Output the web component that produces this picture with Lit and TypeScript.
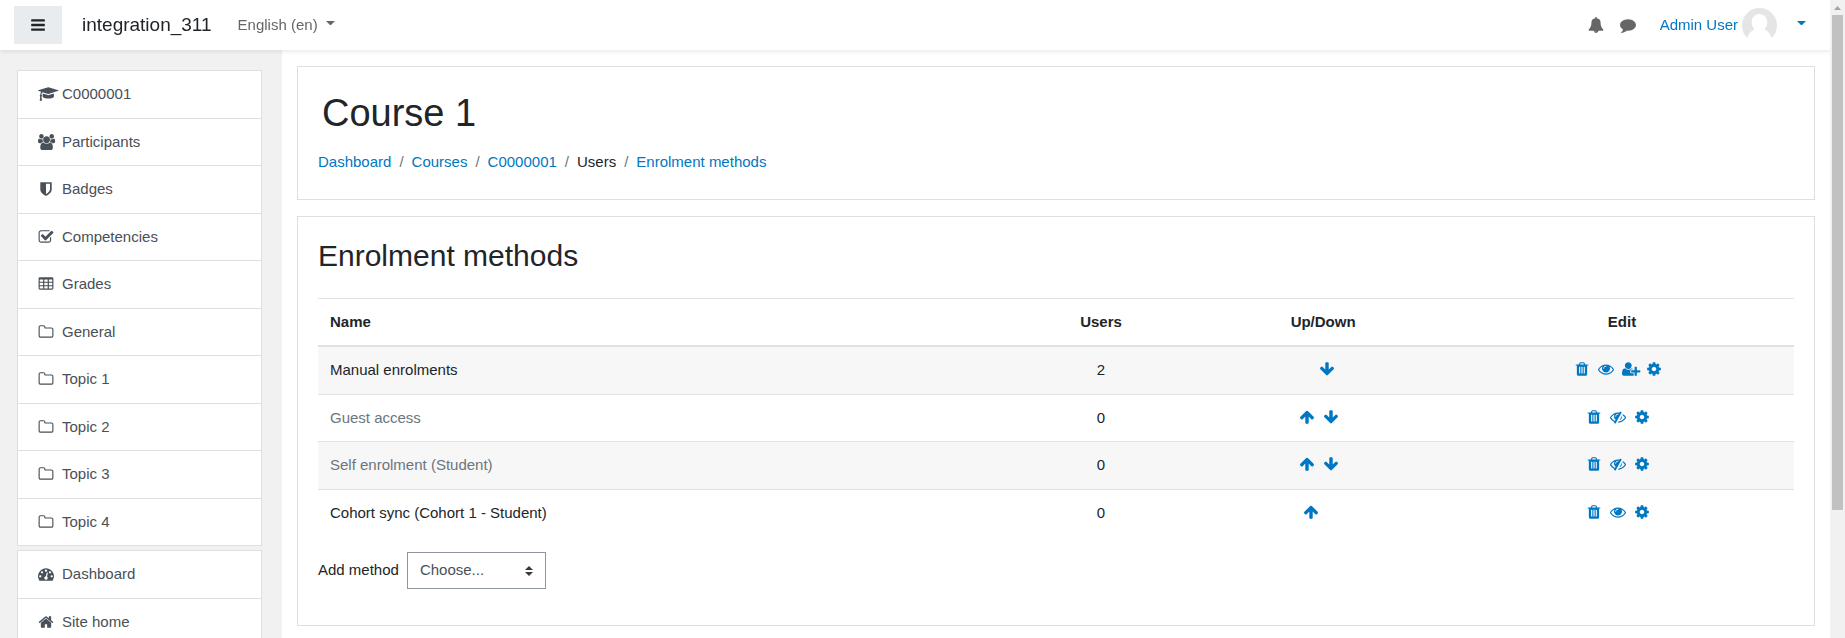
import { LitElement, html, css, svg } from "lit";
import { customElement, property } from "lit/decorators.js";
import { classMap } from "lit/directives/class-map.js";

const ICONS: Record<string, string> = {
  bars: "M1664 1344v128q0 26-19 45t-45 19h-1408q-26 0-45-19t-19-45v-128q0-26 19-45t45-19h1408q26 0 45 19t19 45zm0-512v128q0 26-19 45t-45 19h-1408q-26 0-45-19t-19-45v-128q0-26 19-45t45-19h1408q26 0 45 19t19 45zm0-512v128q0 26-19 45t-45 19h-1408q-26 0-45-19t-19-45v-128q0-26 19-45t45-19h1408q26 0 45 19t19 45z",
  trash: "M704 1376v-704q0-14-9-23t-23-9h-64q-14 0-23 9t-9 23v704q0 14 9 23t23 9h64q14 0 23-9t9-23zm256 0v-704q0-14-9-23t-23-9h-64q-14 0-23 9t-9 23v704q0 14 9 23t23 9h64q14 0 23-9t9-23zm256 0v-704q0-14-9-23t-23-9h-64q-14 0-23 9t-9 23v704q0 14 9 23t23 9h64q14 0 23-9t9-23zm-544-992h448l-48-117q-7-9-17-11h-317q-10 2-17 11zm928 32v64q0 14-9 23t-23 9h-96v948q0 83-47 143.500t-113 60.500h-832q-66 0-113-58.500t-47-141.500v-952h-96q-14 0-23-9t-9-23v-64q0-14 9-23t23-9h309l70-167q15-37 54-63t79-26h320q40 0 79 26t54 63l70 167h309q14 0 23 9t9 23z",
  eye: "M1664 960q-152-236-381-353 61 104 61 225 0 185-131.500 316.500t-316.500 131.500-316.500-131.500-131.500-316.500q0-121 61-225-229 117-381 353 133 205 333.500 326.500t434.500 121.500 434.500-121.500 333.500-326.500zm-720-384q0-20-14-34t-34-14q-125 0-214.500 89.500t-89.500 214.500q0 20 14 34t34 14 34-14 14-34q0-86 61-147t147-61q20 0 34-14t14-34zm848 384q0 34-20 69-140 230-376.500 368.500t-499.500 138.500-499.500-139-376.500-368q-20-35-20-69t20-69q140-229 376.500-368t499.500-139 499.500 139 376.500 368q20 35 20 69z",
  eyeSlash: "M555 1335l78-141q-87-63-136-159t-49-203q0-121 61-225-229 117-381 353 167 258 427 375zm389-759q0-20-14-34t-34-14q-125 0-214.500 89.500t-89.500 214.500q0 20 14 34t34 14 34-14 14-34q0-86 61-147t147-61q20 0 34-14t14-34zm363-191q0 7-1 9-106 189-316 567t-315 566l-49 89q-10 16-28 16-12 0-134-70-16-10-16-28 0-12 44-87-143-65-263.500-173t-208.500-245q-20-31-20-69t20-69q153-235 380-371t496-136q89 0 180 17l54-97q10-16 28-16 5 0 18 6t31 15.500 33 18.500 31.500 18.500 19.500 11.500q16 10 16 27zm37 447q0 139-79 253.500t-209 164.500l280-502q8 45 8 84zm448 128q0 35-20 69-39 64-109 145-150 172-347.500 267t-419.500 95l74-132q212-18 392.500-137t301.500-307q-115-179-282-294l63-112q95 64 182.500 153t144.500 184q20 34 20 69z",
  cog: "M1152 896q0-106-75-181t-181-75-181 75-75 181 75 181 181 75 181-75 75-181zm512-109v222q0 12-8 23t-20 13l-185 28q-19 54-39 91 35 50 107 138 10 12 10 25t-9 23q-27 37-99 108t-94 71q-12 0-26-9l-138-108q-44 23-91 38-16 136-29 186-7 28-36 28h-222q-14 0-24.500-8.500t-11.500-21.500l-28-184q-49-16-90-37l-141 107q-10 9-25 9-14 0-25-11-126-114-165-168-7-10-7-23 0-12 8-23 15-21 51-66.500t54-70.500q-27-50-41-99l-183-27q-13-2-21-12.500t-8-23.500v-222q0-12 8-23t19-13l186-28q14-46 39-92-40-57-107-138-10-12-10-24 0-10 9-23 26-36 98.500-107.500t94.500-71.500q13 0 26 10l138 107q44-23 91-38 16-136 29-186 7-28 36-28h222q14 0 24.500 8.500t11.500 21.500l28 184q49 16 90 37l142-107q9-9 24-9 13 0 25 10 129 119 165 170 7 8 7 22 0 12-8 23-15 21-51 66.500t-54 70.500q26 50 41 98l183 28q13 2 21 12.500t8 23.500z",
  userPlus: "M704 896q-159 0-271.500-112.500t-112.500-271.500 112.500-271.500 271.500-112.500 271.500 112.500 112.500 271.500-112.500 271.500-271.500 112.500zm960 128h352q13 0 22.500 9.500t9.500 22.500v192q0 13-9.500 22.500t-22.500 9.500h-352v352q0 13-9.500 22.500t-22.500 9.500h-192q-13 0-22.500-9.500t-9.500-22.500v-352h-352q-13 0-22.500-9.500t-9.500-22.500v-192q0-13 9.500-22.500t22.500-9.500h352v-352q0-13 9.500-22.500t22.500-9.500h192q13 0 22.500 9.500t9.500 22.500v352zm-736 224q0 52 38 90t90 38h256v238q-68 50-171 50h-874q-121 0-194-69t-73-190q0-53 3.500-103.500t14-109 26.500-108.500 43-97.500 62-81 85.500-53.500 111.500-20q19 0 39 17 79 61 154.500 91.500t164.500 30.500 164.500-30.500 154.500-91.500q20-17 39-17 132 0 217 96h-223q-52 0-90 38t-38 90v192z",
  up: "M1675 971q0 51-37 90l-75 75q-38 38-91 38-54 0-90-38l-294-293v704q0 52-37.500 84.500t-90.500 32.500h-128q-53 0-90.500-32.500t-37.500-84.500v-704l-294 293q-36 38-90 38t-90-38l-75-75q-38-38-38-90 0-53 38-91l651-651q35-37 90-37 54 0 91 37l651 651q37 39 37 91z",
  down: "M1675 832q0 53-37 90l-651 652q-39 37-91 37-53 0-90-37l-651-652q-38-36-38-90 0-53 38-91l74-75q39-37 91-37 53 0 90 37l294 294v-704q0-52 38-90t90-38h128q52 0 90 38t38 90v704l294-294q37-37 90-37 52 0 91 37l75 75q37 39 37 91z",
  bell: "M912 1696q0-16-16-16-59 0-101.500-42.500t-42.500-101.500q0-16-16-16t-16 16q0 73 51.500 124.500t124.500 51.500q16 0 16-16zm816-288q0 52-38 90t-90 38h-448q0 106-75 181t-181 75-181-75-75-181h-448q-52 0-90-38t-38-90q50-42 91-88t85-119.500 74.500-158.500 50-206 19.500-260q0-152 117-282.500t307-158.500q-8-19-8-39 0-40 28-68t68-28 68 28 28 68q0 20-8 39 190 28 307 158.500t117 282.500q0 139 19.500 260t50 206 74.500 158.500 85 119.500 91 88z",
  comment: "M1792 896q0 174-120 321.500t-326 233-450 85.500q-70 0-145-8-198 175-460 242-49 14-114 22-17 2-30.500-9t-17.500-29v-1q-3-4-.5-12t2-10 4.500-9.500l6-9 7-8.500 8-9q7-8 31-34.500t34.500-38 31-39.500 32.500-51 27-59 26-76q-157-89-247.500-220t-90.500-281q0-130 71-248.500t191-204.500 286-136.500 348-50.500q244 0 450 85.500t326 233 120 321.500z",
  folder: "M1600 1312v-704q0-40-28-68t-68-28h-704q-40 0-68-28t-28-68v-64q0-40-28-68t-68-28h-320q-40 0-68 28t-28 68v960q0 40 28 68t68 28h1216q40 0 68-28t28-68zm128-704v704q0 92-66 158t-158 66h-1216q-92 0-158-66t-66-158v-960q0-92 66-158t158-66h320q92 0 158 66t66 158v32h672q92 0 158 66t66 158z",
  check: "M1472 930v318q0 119-84.500 203.500t-203.500 84.500h-832q-119 0-203.500-84.500t-84.500-203.500v-832q0-119 84.500-203.500t203.500-84.500h832q63 0 117 25 15 7 18 23 3 17-9 29l-49 49q-10 10-23 10-3 0-9-2-23-6-45-6h-832q-66 0-113 47t-47 113v832q0 66 47 113t113 47h832q66 0 113-47t47-113v-254q0-13 9-22l64-64q10-10 23-10 6 0 12 3 20 8 20 29zm231-489l-814 814q-24 24-57 24t-57-24l-430-430q-24-24-24-57t24-57l110-110q24-24 57-24t57 24l263 263 647-647q24-24 57-24t57 24l110 110q24 24 24 57t-24 57z",
  table: "M224 128h1344q66 0 113 47t47 113v1088q0 66-47 113t-113 47h-1344q-66 0-113-47t-47-113v-1088q0-66 47-113t113-47zM192 416v192q0 32 32 32h320q32 0 32-32v-192q0-32-32-32h-320q-32 0-32 32zM704 416v192q0 32 32 32h320q32 0 32-32v-192q0-32-32-32h-320q-32 0-32 32zM1216 416v192q0 32 32 32h320q32 0 32-32v-192q0-32-32-32h-320q-32 0-32 32zM192 800v192q0 32 32 32h320q32 0 32-32v-192q0-32-32-32h-320q-32 0-32 32zM704 800v192q0 32 32 32h320q32 0 32-32v-192q0-32-32-32h-320q-32 0-32 32zM1216 800v192q0 32 32 32h320q32 0 32-32v-192q0-32-32-32h-320q-32 0-32 32zM192 1184v192q0 32 32 32h320q32 0 32-32v-192q0-32-32-32h-320q-32 0-32 32zM704 1184v192q0 32 32 32h320q32 0 32-32v-192q0-32-32-32h-320q-32 0-32 32zM1216 1184v192q0 32 32 32h320q32 0 32-32v-192q0-32-32-32h-320q-32 0-32 32z",
  gauge: "M384 1152q0-53-37.500-90.500t-90.500-37.500-90.500 37.500-37.500 90.500 37.500 90.500 90.500 37.500 90.500-37.500 37.500-90.500zm192-448q0-53-37.500-90.500t-90.500-37.500-90.500 37.500-37.500 90.500 37.500 90.500 90.500 37.500 90.500-37.500 37.500-90.500zm428 481l101-382q6-26-7.500-48.500t-38.500-29.500-48 6.500-30 39.500l-101 382q-60 5-107 43.500t-63 98.500q-20 77 20 146t117 89 146-20 89-117q16-60-6-117t-72-91zm660-33q0-53-37.500-90.500t-90.500-37.500-90.500 37.500-37.500 90.500 37.500 90.500 90.500 37.500 90.500-37.500 37.500-90.500zm-640-640q0-53-37.500-90.500t-90.500-37.500-90.500 37.500-37.500 90.500 37.500 90.500 90.500 37.500 90.500-37.500 37.500-90.500zm448 192q0-53-37.500-90.500t-90.500-37.500-90.500 37.500-37.500 90.500 37.500 90.500 90.500 37.500 90.500-37.500 37.500-90.500zm320 448q0 261-141 483-19 29-54 29h-1402q-35 0-54-29-141-221-141-483 0-182 71-348t191-286 286-191 348-71 348 71 286 191 191 286 71 348z",
  home: "M1472 992v480q0 26-19 45t-45 19h-384v-384h-256v384h-384q-26 0-45-19t-19-45v-480q0-1 .5-3t.5-3l575-474 575 474q1 2 1 6zm223-69l-62 74q-8 9-21 11h-3q-13 0-21-7l-692-577-692 577q-12 8-24 7-13-2-21-11l-62-74q-8-10-7-23.500t11-21.500l719-599q32-26 76-26t76 26l244 204v-195q0-14 9-23t23-9h192q14 0 23 9t9 23v408l219 182q10 8 11 21.500t-7 23.500z",
  shield: "M1344 960v-640h-448v1137q119-63 213-137 235-184 235-360zm192-768v768q0 86-33.500 170.500t-83 150-118 127.500-126.500 103-121 77.500-89.500 49.500-42.500 20q-12 6-26 6t-26-6q-16-7-42.500-20t-89.500-49.500-121-77.500-126.500-103-118-127.500-83-150-33.500-170.500v-768q0-26 19-45t45-19h1152q26 0 45 19t19 45z",
  users: "M593 896q-162 5-265 128h-134q-82 0-138-40.500t-56-118.500q0-353 124-353 6 0 43.500 21t97.500 42.500 119 21.500q67 0 133-23-5 37-5 66 0 139 81 256zm1071 637q0 120-73 189.500t-194 69.500h-874q-121 0-194-69.500t-73-189.500q0-53 3.500-103.500t14-109 26.500-108.500 43-97.500 62-81 85.500-53.500 111.500-20q10 0 43 21.500t73 48 107 48 135 21.500 135-21.500 107-48 73-48 43-21.500q61 0 111.500 20t85.500 53.500 62 81 43 97.500 26.500 108.500 14 109 3.500 103.500zm-1024-1277q0 106-75 181t-181 75-181-75-75-181 75-181 181-75 181 75 75 181zm704 384q0 159-112.500 271.500t-271.500 112.500-271.500-112.500-112.500-271.500 112.500-271.500 271.500-112.500 271.500 112.500 112.500 271.500zm576 225q0 78-56 118.500t-138 40.500h-134q-103-123-265-128 81-117 81-256 0-29-5-66 66 23 133 23 59 0 119-21.500t97.500-42.500 43.500-21q124 0 124 353zm-128-609q0 106-75 181t-181 75-181-75-75-181 75-181 181-75 181 75 75 181z",
  cap: "M1774 836l18 316q4 69-82 128t-235 93.500-323 34.500-323-34.500-235-93.500-82-128l18-316 574 181q22 7 48 7t48-7zm530-324q0 23-22 31l-1120 352q-4 1-10 1t-10-1l-652-206q-43 34-71 111.500t-34 178.500q63 36 63 109 0 69-58 107l58 433q2 14-8 25-9 11-24 11h-192q-15 0-24-11-10-11-8-25l58-433q-58-38-58-107 0-73 65-111 11-207 98-330l-333-104q-22-8-22-31t22-31l1120-352q4-1 10-1t10 1l1120 352q22 8 22 31z",
};

@customElement("fa-icon")
class FaIcon extends LitElement {
  @property() name = "";

  static styles = css`
    :host { display: inline-block; width: 16px; height: 16px; flex: none; }
    .glyph { display: block; width: 16px; height: 16px; overflow: visible; fill: currentColor; fill-rule: evenodd; }
  `;

  render() {
    return html`<svg class="glyph" viewBox="0 0 1792 1792" aria-hidden="true">${svg`<path d=${ICONS[this.name] ?? ""}></path>`}</svg>`;
  }
}

interface NavItem { icon: string; label: string; }
interface Method { name: string; users: number; up: boolean; down: boolean; enabled: boolean; manual?: boolean; }

const NAV: NavItem[][] = [
  [
    { icon: "cap", label: "C0000001" },
    { icon: "users", label: "Participants" },
    { icon: "shield", label: "Badges" },
    { icon: "check", label: "Competencies" },
    { icon: "table", label: "Grades" },
    { icon: "folder", label: "General" },
    { icon: "folder", label: "Topic 1" },
    { icon: "folder", label: "Topic 2" },
    { icon: "folder", label: "Topic 3" },
    { icon: "folder", label: "Topic 4" },
  ],
  [
    { icon: "gauge", label: "Dashboard" },
    { icon: "home", label: "Site home" },
  ],
];

const METHODS: Method[] = [
  { name: "Manual enrolments", users: 2, up: false, down: true, enabled: true, manual: true },
  { name: "Guest access", users: 0, up: true, down: true, enabled: false },
  { name: "Self enrolment (Student)", users: 0, up: true, down: true, enabled: false },
  { name: "Cohort sync (Cohort 1 - Student)", users: 0, up: true, down: false, enabled: true },
];

const CRUMBS = [
  { label: "Dashboard", link: true },
  { label: "Courses", link: true },
  { label: "C0000001", link: true },
  { label: "Users", link: false },
  { label: "Enrolment methods", link: true },
];

@customElement("app-root")
class AppRoot extends LitElement {
  static styles = css`
    :host {
      display: flex;
      height: 100vh;
      background: #fff;
      color: #212529;
      font-family: "Liberation Sans", Arial, sans-serif;
      font-size: 15px;
      line-height: 1.5;
    }
    * { box-sizing: border-box; }
    a { color: #0077c2; text-decoration: none; }
    a:hover { text-decoration: underline; }

    .page { flex: 1; min-width: 0; display: flex; flex-direction: column; overflow-y: auto; scrollbar-width: none; }

    .topbar {
      position: sticky;
      top: 0;
      z-index: 2;
      flex: none;
      display: flex;
      align-items: center;
      height: 50px;
      padding: 0 24px 0 14px;
      background: #fff;
      box-shadow: 0 2px 4px rgba(0, 0, 0, 0.08);
    }
    .menu {
      display: flex;
      align-items: center;
      justify-content: center;
      width: 48px;
      height: 38px;
      padding: 0;
      border: 0;
      background: #e9ecef;
      color: #212529;
    }
    .brand { margin-left: 20px; color: #212529; font-size: 19px; }
    .lang { display: flex; align-items: center; gap: 8px; margin-left: 26px; color: #666; }
    .caret { width: 9px; height: 4px; margin-bottom: 4px; fill: currentColor; }
    .tools { display: flex; align-items: center; margin-left: auto; }
    .tool { display: flex; margin-right: 16px; padding: 0; border: 0; background: none; color: #666; }
    .user { display: flex; align-items: center; margin-left: 8px; }
    .avatar { width: 35px; height: 35px; margin: 0 20px 0 4px; }

    .body { flex: 1 0 auto; display: flex; }
    .drawer { width: 282px; flex: none; padding: 20px 20px 0 17px; background: #f1f1f1; }
    .group { margin: 0 0 4px; padding: 0; border: 1px solid #dfdfdf; background: #fff; list-style: none; }
    .entry + .entry { border-top: 1px solid #dfdfdf; }
    .entry-link { display: flex; align-items: center; gap: 8px; padding: 12px 20px; color: #495057; }

    .main { flex: 1; min-width: 0; padding: 16px 15px 12px; }
    .card { padding: 20px; border: 1px solid #dfdfdf; background: #fff; }
    .card + .card { margin-top: 16px; }
    .title { margin: 4px 4px 16px; font-size: 38px; font-weight: 400; line-height: 44px; }
    .crumbs { display: flex; margin: 0 0 5px; padding: 0; list-style: none; }
    .crumb + .crumb::before { content: "/"; padding: 0 8px; color: #6c757d; }

    .heading { margin: 0 0 24px; font-size: 30px; font-weight: 400; line-height: 37px; }
    .methods { width: 100%; margin-bottom: 16px; border-collapse: collapse; table-layout: fixed; }
    .cell { padding: 12px; border-top: 1px solid #dee2e6; text-align: center; vertical-align: top; }
    .head { border-bottom: 2px solid #dee2e6; font-weight: 700; }
    .row:nth-child(odd) { background: #f7f7f7; }
    .name { width: 46.6%; text-align: left; }
    .count { width: 12.9%; }
    .order { width: 17.2%; }
    .edit { width: 23.3%; }
    .dimmed { color: #6c757d; }
    .actions { display: flex; justify-content: center; padding-top: 2px; }
    .action { display: flex; margin-right: 8px; }
    .spacer { width: 16px; height: 16px; }

    .add { display: flex; align-items: center; gap: 8px; margin-bottom: 16px; }
    .choose {
      height: 37px;
      width: 139px;
      padding: 0 28px 0 12px;
      appearance: none;
      border: 1px solid #8f959e;
      border-radius: 0;
      color: #495057;
      font: inherit;
      background: #fff url("data:image/svg+xml,%3Csvg xmlns='http://www.w3.org/2000/svg' viewBox='0 0 4 5'%3E%3Cpath fill='%23343a40' d='M2 0L0 2h4zm0 5L0 3h4z'/%3E%3C/svg%3E") no-repeat right 12px center / 8px 10px;
    }

    .scrollbar { flex: none; display: flex; flex-direction: column; align-items: center; width: 15px; background: #f1f1f1; }
    .arrow { flex: none; width: 7px; height: 15px; fill: #a3a3a3; }
    .thumb { width: 11px; height: 77.6%; background: #c1c1c1; }
  `;

  private caret() {
    return html`<svg class="caret" viewBox="0 0 9 4" aria-hidden="true"><path d="M0 0h9L4.500 4.500z"></path></svg>`;
  }

  private action(icon: string, label: string) {
    return html`<a class="action" href="#" aria-label=${label}><fa-icon name=${icon}></fa-icon></a>`;
  }

  private methodRow(m: Method) {
    return html`
      <tr class="row">
        <td class=${classMap({ cell: true, name: true, dimmed: !m.enabled })}>${m.name}</td>
        <td class="cell">${m.users}</td>
        <td class="cell">
          <div class="actions">
            ${m.up ? this.action("up", "Up") : html`<span class="spacer"></span>`}
            ${m.down ? this.action("down", "Down") : html`<span class="spacer"></span>`}
          </div>
        </td>
        <td class="cell">
          <div class="actions">
            ${this.action("trash", "Delete")}
            ${m.enabled ? this.action("eye", "Disable") : this.action("eyeSlash", "Enable")}
            ${m.manual ? this.action("userPlus", "Enrol users") : ""}
            ${this.action("cog", "Edit")}
          </div>
        </td>
      </tr>`;
  }

  render() {
    return html`
      <div class="page">
        <header class="topbar">
          <button class="menu" aria-label="Side panel"><fa-icon name="bars"></fa-icon></button>
          <a class="brand" href="#">integration_311</a>
          <a class="lang" href="#">English (en) ${this.caret()}</a>
          <div class="tools">
            <button class="tool" aria-label="Notifications"><fa-icon name="bell"></fa-icon></button>
            <button class="tool" aria-label="Messages"><fa-icon name="comment"></fa-icon></button>
            <a class="user" href="#">
              Admin User
              <svg class="avatar" viewBox="0 0 35 35" aria-hidden="true">
                <circle cx="17.500" cy="17.500" r="17.500" fill="#e5e5e5"></circle>
                <path fill="#fff" d="M17.500 6c4.600 0 7.800 3.600 7.800 8.300 0 3-1.200 5.600-2.900 7.200 3 .9 5.600 3.400 7.200 8.300L31 36H4l1.400-6.200c1.600-4.900 4.200-7.400 7.200-8.300-1.700-1.600-2.900-4.200-2.900-7.200C9.700 9.600 12.900 6 17.500 6z"></path>
              </svg>
              ${this.caret()}
            </a>
          </div>
        </header>
        <div class="body">
          <nav class="drawer" aria-label="Site navigation">
            ${NAV.map((group) => html`
              <ul class="group">
                ${group.map((item) => html`
                  <li class="entry"><a class="entry-link" href="#"><fa-icon name=${item.icon}></fa-icon>${item.label}</a></li>`)}
              </ul>`)}
          </nav>
          <main class="main">
            <section class="card">
              <h1 class="title">Course 1</h1>
              <ol class="crumbs">
                ${CRUMBS.map((c) => html`<li class="crumb">${c.link ? html`<a href="#">${c.label}</a>` : c.label}</li>`)}
              </ol>
            </section>
            <section class="card">
              <h2 class="heading">Enrolment methods</h2>
              <table class="methods">
                <thead>
                  <tr>
                    <th class="cell head name" scope="col">Name</th>
                    <th class="cell head count" scope="col">Users</th>
                    <th class="cell head order" scope="col">Up/Down</th>
                    <th class="cell head edit" scope="col">Edit</th>
                  </tr>
                </thead>
                <tbody>${METHODS.map((m) => this.methodRow(m))}</tbody>
              </table>
              <div class="add">
                <label for="method">Add method</label>
                <select class="choose" id="method"><option>Choose...</option></select>
              </div>
            </section>
          </main>
        </div>
      </div>
      <div class="scrollbar" aria-hidden="true">
        <svg class="arrow" viewBox="0 0 7 15"><path d="M0 10h7L3.500 6z"></path></svg>
        <div class="thumb"></div>
      </div>
    `;
  }
}
